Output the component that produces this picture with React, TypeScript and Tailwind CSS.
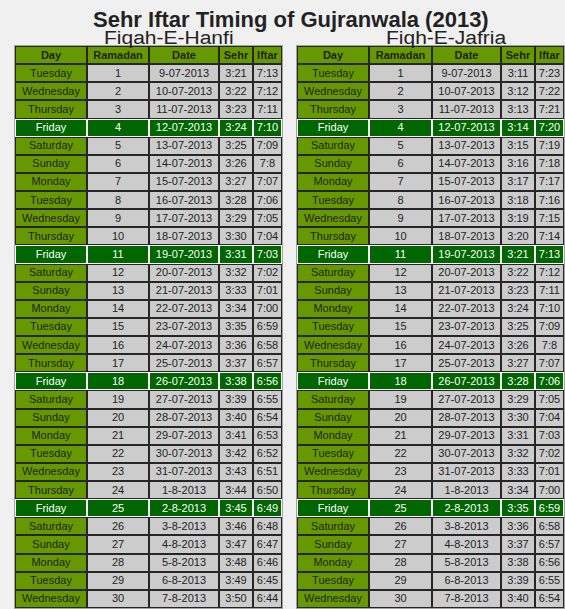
import React from "react";

/////////////////////////////////////
// DATA
/////////////////////////////////////

const DAYS = ["Tuesday", "Wednesday", "Thursday", "Friday", "Saturday", "Sunday", "Monday"];

const dateOf = (i: number): string => {
  const d = 9 + i;
  return d <= 31 ? `${d}-07-2013` : `${d - 31}-8-2013`;
};

const clock = (mins: number): string => {
  const h = Math.floor(mins / 60);
  const m = mins % 60;
  return `${h}:${m < 10 ? "0" + m : m}`;
};

type Row = { day: string; ramadan: number; date: string; sehr: string; iftar: string };

const buildRows = (sehrStart: number, iftarStart: number, oddIftar: number): Row[] =>
  Array.from({ length: 30 }, (_, i) => ({
    day: DAYS[i % 7],
    ramadan: i + 1,
    date: dateOf(i),
    sehr: clock(sehrStart + i),
    iftar: i === oddIftar ? "7:8" : clock(iftarStart - i),
  }));

const HANFI = buildRows(3 * 60 + 21, 7 * 60 + 13, 5);
const JAFRIA = buildRows(3 * 60 + 11, 7 * 60 + 23, 15);

/////////////////////////////////////
// COMPONENT: TIMING TABLE
/////////////////////////////////////

const TimingTable = ({ title, rows, widths }: { title: string; rows: Row[]; widths: number[] }): JSX.Element => {
  const head = ["Day", "Ramadan", "Date", "Sehr", "Iftar"];
  return (
    <div>
      <div className="-mt-[1px] h-[14px] pl-[90px] text-[21px] leading-[14px] whitespace-nowrap">
        <span className="inline-block origin-bottom scale-y-[0.86]">{title}</span>
      </div>
      <table className="mt-[1px] w-[269px] table-fixed border-separate border-spacing-0 border border-[#a3a3a3] text-[11px] leading-[13px] text-center">
        <colgroup>
          {widths.map((w, i) => (
            <col key={i} style={{ width: w }} />
          ))}
        </colgroup>
        <thead>
          <tr className="h-[18.14px]">
            {head.map((h) => (
              <th key={h} className="border border-[#262626] bg-[#669900] p-0 font-bold">
                {h}
              </th>
            ))}
          </tr>
        </thead>
        <tbody>
          {rows.map((r) => {
            const fri = r.day === "Friday";
            const cell = fri
              ? "border border-white bg-[#006600] text-white p-0"
              : "border border-[#262626] bg-[#cccccc] p-0";
            const dayCell = fri
              ? "border border-white bg-[#006600] text-white p-0"
              : "border border-[#262626] bg-[#669900] p-0";
            return (
              <tr key={r.ramadan} className="h-[18.14px]">
                <td className={dayCell}>{r.day}</td>
                <td className={cell}>{r.ramadan}</td>
                <td className={cell}>{r.date}</td>
                <td className={cell}>{r.sehr}</td>
                <td className={cell}>{r.iftar}</td>
              </tr>
            );
          })}
        </tbody>
      </table>
    </div>
  );
};

/////////////////////////////////////
// COMPONENT: APP
/////////////////////////////////////

const App = (): JSX.Element => {
  return (
    <div className="min-h-screen bg-[#f0f0f0] font-['Liberation_Sans',Arial,sans-serif] text-[#222]">
      <h1 className="pt-[9px] pl-[93px] text-[22px] font-bold leading-[22px] whitespace-nowrap">
        Sehr Iftar Timing of Gujranwala (2013)
      </h1>
      <div className="flex gap-[13px] pl-[14px]">
        <TimingTable title="Fiqah-E-Hanfi" rows={HANFI} widths={[72, 62, 70, 34, 29]} />
        <TimingTable title="Fiqh-E-Jafria" rows={JAFRIA} widths={[72, 63, 69, 34, 29]} />
      </div>
    </div>
  );
};

/////////////////////////////////////
// EXPORTING APP
/////////////////////////////////////

export default App;
